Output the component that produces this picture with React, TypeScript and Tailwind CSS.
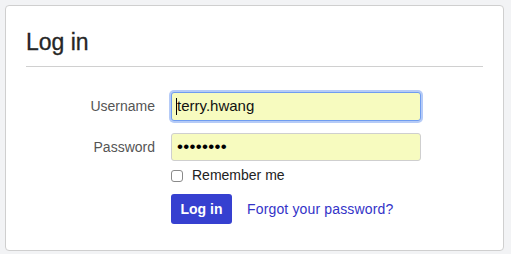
import React from "react";

export default function App() {
  return (
    <div className="min-h-[254px] w-[511px] bg-[#f2f3f5] p-[5px]" style={{ fontFamily: '"Liberation Sans", Arial, sans-serif' }}>
      <div className="h-[246px] w-[499px] rounded-[4px] border border-[#cfcfcf] bg-white px-[20px] pt-[22px]">
        <h1 className="text-[23px] leading-[28px] text-[#262626] [-webkit-text-stroke:0.3px_#262626]">Log in</h1>
        <div className="mt-[10px] h-px bg-[#d0d0d0]" />
        <div className="mt-[25px] grid grid-cols-[129px_1fr] items-center gap-x-[16px]">
          <label className="text-right text-[14px] text-[#555]">Username</label>
          <div className="flex h-[29px] w-[250px] items-center rounded-[3px] border border-[#6f9cf0] bg-[#f7fbbf] pl-[4px] text-[15px] text-[#111] shadow-[0_0_0_2px_rgba(120,160,240,0.55)]">
            <span className="h-[17px] w-px bg-black" />
            <span>terry.hwang</span>
          </div>
          <label className="mt-[12px] text-right text-[14px] text-[#555]">Password</label>
          <div className="mt-[12px] flex h-[28px] w-[250px] items-center rounded-[3px] border border-[#cfcfcf] bg-[#f7fbbf] pl-[5px] text-[17px] tracking-[0.3px] text-black">
            ••••••••
          </div>
          <div />
          <label className="mt-[4px] flex items-center text-[14px] text-[#222]">
            <span className="mr-[9px] h-[12px] w-[12px] rounded-[3px] border border-[#8a8a8a] bg-white" />
            Remember me
          </label>
          <div />
          <div className="mt-[8px] flex items-center">
            <button className="h-[30px] w-[61px] rounded-[3px] bg-[#3640d0] text-[14px] font-bold text-white">Log in</button>
            <a className="ml-[15px] text-[14px] tracking-[0.15px] text-[#3333c8]">Forgot your password?</a>
          </div>
        </div>
      </div>
    </div>
  );
}
